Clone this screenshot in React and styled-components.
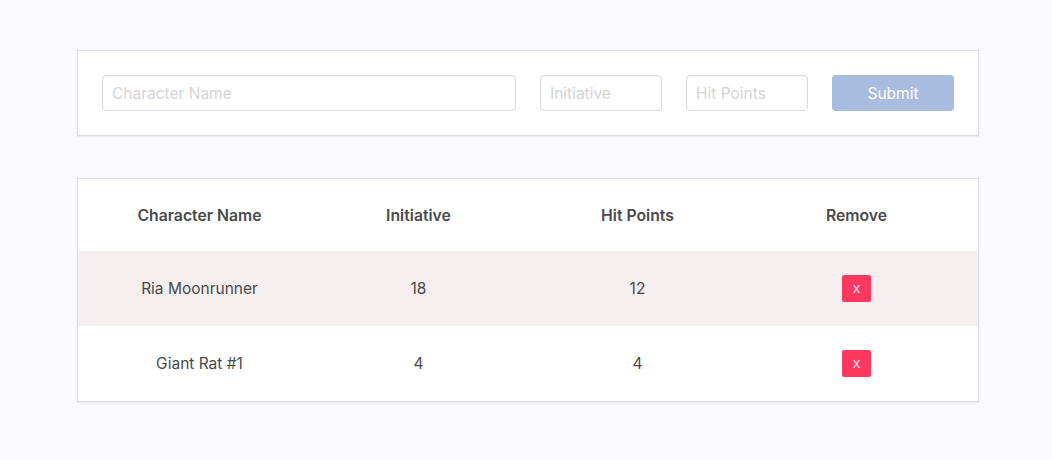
import React from 'react';
import styled, { createGlobalStyle } from 'styled-components';

const GlobalStyle = createGlobalStyle`
    html, body {
        margin: 0;
        padding: 0;
        background: #f9f9fe;
        font-family: Inter, "Open Sans", "Liberation Sans", sans-serif;
        color: #4a4a4a;
    }
`

const Page = styled.div`
    min-height: 460px;
    padding: 50px 73px 0 77px;
    box-sizing: border-box;
    display: flex;
    flex-direction: column;
    gap: 42px;
`
const Card = styled.div`
    background: #fff;
    border: 1px solid #dcdce2;
    box-shadow: 0 1px 2px rgba(10, 10, 10, 0.08);
`
const Form = styled.form`
    display: grid;
    grid-template-columns: 1fr 122px 122px 122px;
    gap: 24px;
    padding: 24px 24px 24px 24px;
`
const Input = styled.input`
    height: 36px;
    box-sizing: border-box;
    border: 1px solid #dbdbdb;
    border-radius: 4px;
    padding: 0 9px;
    font-family: inherit;
    font-size: 15.5px;
    color: #4a4a4a;
    outline: none;
    box-shadow: inset 0 1px 2px rgba(10, 10, 10, 0.05);
    &::placeholder {
        color: #d4d4d6;
    }
`
const SubmitButton = styled.button`
    height: 36px;
    border: none;
    border-radius: 4px;
    background: #a7bcde;
    color: #fff;
    font-family: inherit;
    font-size: 15.5px;
`
const Row = styled.div`
    display: grid;
    grid-template-columns: repeat(4, 1fr);
    align-items: center;
    padding: 0 12px;
    height: ${p => p.$head ? '72px' : '75px'};
    background: ${p => p.$striped ? '#f5efef' : '#fff'};
`
const Cell = styled.div`
    text-align: center;
    font-size: ${p => p.$head ? '15.75px' : '15.5px'};
    font-weight: ${p => p.$head ? 600 : 400};
    color: #4a4a4a;
`
const RemoveButton = styled.button`
    width: 29px;
    height: 27px;
    border: none;
    border-radius: 2px;
    background: #ff3860;
    color: #fff;
    font-family: inherit;
    font-size: 11px;
    padding: 0;
`

const characters = [
    { name: 'Ria Moonrunner', initiative: 18, hp: 12 },
    { name: 'Giant Rat #1', initiative: 4, hp: 4 },
]

const App = () => {
    return (
        <>
            <GlobalStyle />
            <Page>
                <Card>
                    <Form onSubmit={e => e.preventDefault()}>
                        <Input placeholder="Character Name" />
                        <Input placeholder="Initiative" />
                        <Input placeholder="Hit Points" />
                        <SubmitButton type="submit">Submit</SubmitButton>
                    </Form>
                </Card>
                <Card>
                    <Row $head>
                        <Cell $head>Character Name</Cell>
                        <Cell $head>Initiative</Cell>
                        <Cell $head>Hit Points</Cell>
                        <Cell $head>Remove</Cell>
                    </Row>
                    {characters.map((c, i) => (
                        <Row key={c.name} $striped={i % 2 === 0}>
                            <Cell>{c.name}</Cell>
                            <Cell>{c.initiative}</Cell>
                            <Cell>{c.hp}</Cell>
                            <Cell><RemoveButton>X</RemoveButton></Cell>
                        </Row>
                    ))}
                </Card>
            </Page>
        </>
    )
}

export default App
